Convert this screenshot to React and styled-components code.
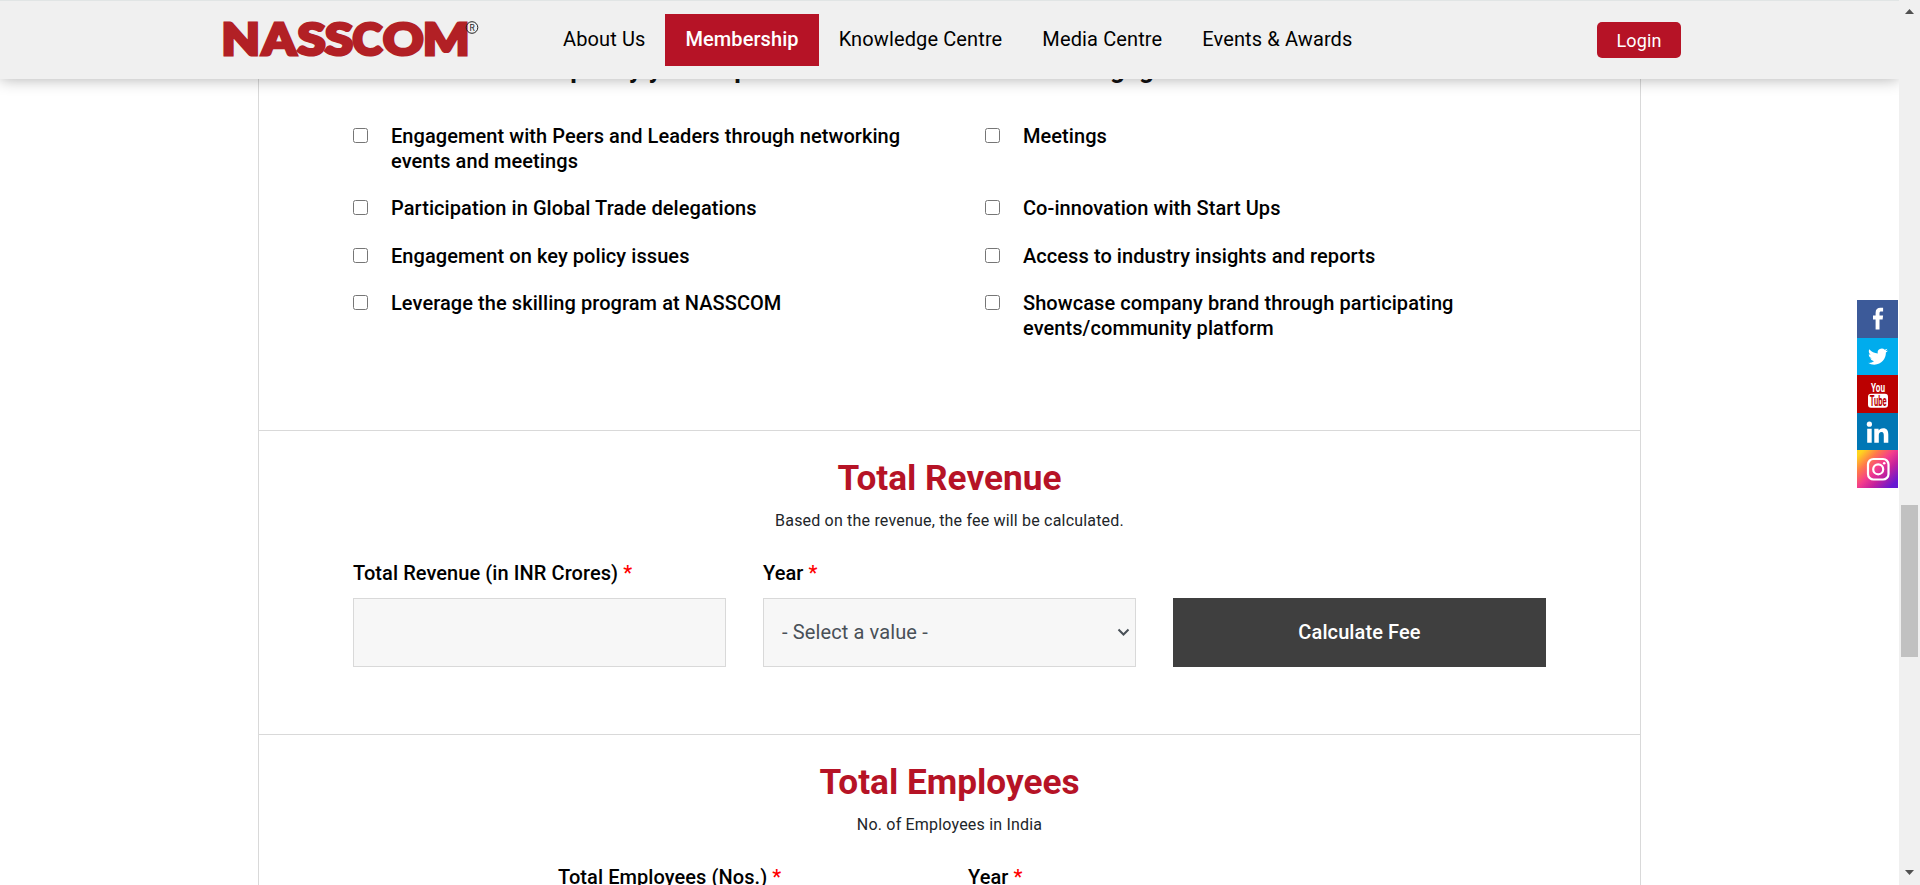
import React from "react";
import styled, { createGlobalStyle } from "styled-components";

const RED = "#b61326";
const LINE = "#d9d9d9";

const GlobalStyle = createGlobalStyle`
  * { box-sizing: border-box; }
  html, body { margin: 0; padding: 0; background: #fff; overflow: hidden; }
  body, button, input, select { font-family: Roboto, "Liberation Sans", sans-serif; }
`;

const Shell = styled.div`
  position: relative;
  display: flex;
  width: 1920px;
  height: 885px;
  overflow: hidden;
  background: #fff;
`;

const Page = styled.div`
  width: 1899px;
  height: 885px;
  overflow: hidden;
`;

const Header = styled.header`
  position: relative;
  z-index: 2;
  display: flex;
  align-items: flex-start;
  height: 79px;
  padding: 0 218px 0 222px;
  border-top: 1px solid #e1e5e5;
  background: #f0f0f0;
  box-shadow: 0 0 15px rgba(0, 0, 0, 0.32);
`;

const Logo = styled.svg`
  width: 260px;
  height: 60px;
  margin-top: 9px;
  overflow: visible;
`;

const Nav = styled.nav`
  display: flex;
  margin: 13px auto 0 61px;
`;

const NavLink = styled.a`
  height: 52px;
  padding: 0 20px;
  font-size: 20px;
  line-height: 50px;
  white-space: nowrap;
  letter-spacing: ${(p) => (p.$active ? 0.08 : 0.12)}px;
  font-weight: ${(p) => (p.$active ? 500 : 400)};
  color: ${(p) => (p.$active ? "#fff" : "#000")};
  background: ${(p) => (p.$active ? RED : "transparent")};
`;

const Login = styled.button`
  width: 84px;
  height: 36px;
  margin-top: 21px;
  padding: 1px 0 0;
  border: 0;
  border-radius: 5px;
  background: ${RED};
  color: #fff;
  font-size: 18px;
  line-height: 36px;
  letter-spacing: 0.1px;
`;

const Panel = styled.main`
  width: 1383px;
  margin: 0 auto;
  border: solid ${LINE};
  border-width: 0 1px;
`;

const Section = styled.section`
  display: flow-root;
  height: ${(p) => p.$height}px;
  padding: 0 94px;
  border-bottom: 1px solid ${LINE};
`;

const Question = styled.h3`
  margin: -26px 0 39px 118px;
  font-size: 26px;
  line-height: 32px;
  font-weight: 700;
  letter-spacing: 0.05px;
  white-space: nowrap;
  color: #111;
`;

const Options = styled.div`
  display: grid;
  grid-template-columns: 632px 1fr;
  row-gap: 22.3px;
`;

const Option = styled.label`
  display: flex;
  align-items: flex-start;
  padding-right: 60px;
  font-size: 20px;
  line-height: 25px;
  font-weight: 500;
  letter-spacing: 0.07px;
  color: #000;
`;

const Checkbox = styled.input`
  flex: none;
  width: 15px;
  height: 15px;
  margin: 4px 22.6px 0 0.4px;
`;

const Title = styled.h2`
  margin: 0;
  padding-top: 26px;
  font-size: 35.2px;
  line-height: 42px;
  font-weight: 700;
  text-align: center;
  color: ${RED};
`;

const Subtitle = styled.p`
  margin: 10px 0 0;
  font-size: 16px;
  line-height: 24px;
  letter-spacing: 0.19px;
  text-align: center;
  color: #212529;
`;

const Fields = styled.div`
  display: flex;
  justify-content: center;
  align-items: flex-end;
  gap: 37px;
  margin-top: 26px;
`;

const Field = styled.div`
  width: 373px;
`;

const FieldLabel = styled.label`
  display: block;
  margin-bottom: 11px;
  font-size: 20px;
  line-height: 28px;
  font-weight: 500;
  letter-spacing: 0.075px;
  color: #000;
`;

const Required = styled.span`
  color: #f00;
`;

const TextInput = styled.input`
  display: block;
  width: 100%;
  height: 69px;
  border: 1px solid ${LINE};
  border-radius: 0;
  background: #f7f7f7;
`;

const SelectBox = styled.div`
  display: flex;
  align-items: center;
  justify-content: space-between;
  height: 69px;
  padding: 0 5px 1px 18px;
  border: 1px solid ${LINE};
  background: #f7f7f7;
  font-size: 20px;
  letter-spacing: 0.12px;
  color: #495057;
`;

const CalcButton = styled.button`
  width: 373px;
  height: 69px;
  padding: 0 0 2px;
  border: 0;
  background: #3f3f3f;
  color: #fff;
  font-size: 20px;
  font-weight: 500;
  letter-spacing: 0.1px;
`;

const SocialBar = styled.aside`
  position: absolute;
  z-index: 1;
  top: 300px;
  right: 22px;
  width: 41px;
  display: grid;
  grid-template-rows: 38px 37px 38px 37px 38px;
`;

const Tile = styled.svg`
  display: block;
  width: 41px;
  height: 100%;
  background: ${(p) => p.$fill};
`;

const Scrollbar = styled.div`
  position: relative;
  z-index: 3;
  display: flex;
  flex-direction: column;
  align-items: center;
  width: 21px;
  height: 885px;
  padding: 9px 0 10px;
  background: #f0f0f0;
`;

const Arrow = styled.svg`
  width: 9px;
  height: 5px;
  margin-bottom: ${(p) => (p.$up ? 491 : 0)}px;
`;

const Thumb = styled.div`
  width: 17px;
  height: 152px;
  margin-bottom: auto;
  background: #c1c1c1;
`;

const options = [
  "Engagement with Peers and Leaders through networking events and meetings",
  "Meetings",
  "Participation in Global Trade delegations",
  "Co-innovation with Start Ups",
  "Engagement on key policy issues",
  "Access to industry insights and reports",
  "Leverage the skilling program at NASSCOM",
  "Showcase company brand through participating events/community platform",
];

const YearField = () => (
  <Field>
    <FieldLabel>Year <Required>*</Required></FieldLabel>
    <SelectBox>
      <span>- Select a value -</span>
      <svg width="13" height="9" viewBox="0 0 13 9">
        <path d="M1.5 1.5 6.5 6.5 11.5 1.5" fill="none" stroke="#495057" strokeWidth="2" />
      </svg>
    </SelectBox>
  </Field>
);

// Start and advance of each letter of the wordmark
const wordmark = [
  ["N", 221.5, 38.5],
  ["A", 262, 34],
  ["S", 297.5, 28],
  ["S", 325, 28],
  ["C", 352.5, 29.5],
  ["O", 383, 40.5],
  ["M", 423, 46.5],
];

export default function App() {
  return (
    <Shell>
      <GlobalStyle />
      <Page>
        <Header>
          <Logo viewBox="222 10 260 60">
            <g fontFamily="Lato" fontWeight="900" fontSize="44.5" fill="#b22025" stroke="#b22025" strokeWidth="3.2">
              {wordmark.map(([letter, x, advance]) => (
                <text key={x} x={x} y="55.4" textLength={advance} lengthAdjust="spacingAndGlyphs">{letter}</text>
              ))}
            </g>
            <circle cx="472" cy="27.5" r="5.8" fill="none" stroke="#222" strokeWidth="1" />
            <text x="469.4" y="30.7" fontFamily="Roboto" fontSize="8.5" fill="#222">R</text>
          </Logo>
          <Nav>
            <NavLink>About Us</NavLink>
            <NavLink $active>Membership</NavLink>
            <NavLink>Knowledge Centre</NavLink>
            <NavLink>Media Centre</NavLink>
            <NavLink>Events &amp; Awards</NavLink>
          </Nav>
          <Login>Login</Login>
        </Header>
        <Panel>
          <Section $height={352}>
            <Question>Please specify your expectations for the NASSCOM engagement</Question>
            <Options>
              {options.map((text) => (
                <Option key={text}>
                  <Checkbox type="checkbox" />
                  <span>{text}</span>
                </Option>
              ))}
            </Options>
          </Section>
          <Section $height={304}>
            <Title>Total Revenue</Title>
            <Subtitle>Based on the revenue, the fee will be calculated.</Subtitle>
            <Fields>
              <Field>
                <FieldLabel>Total Revenue (in INR Crores) <Required>*</Required></FieldLabel>
                <TextInput />
              </Field>
              <YearField />
              <CalcButton>Calculate Fee</CalcButton>
            </Fields>
          </Section>
          <Section $height={304}>
            <Title>Total Employees</Title>
            <Subtitle>No. of Employees in India</Subtitle>
            <Fields>
              <Field>
                <FieldLabel>Total Employees (Nos.) <Required>*</Required></FieldLabel>
                <TextInput />
              </Field>
              <YearField />
            </Fields>
          </Section>
        </Panel>
      </Page>
      <SocialBar>
        <Tile $fill="#3c5a99" viewBox="0 0 41 38">
          <path d="M18.6 29.5V19.5H16v-4h2.6v-2.6c0-3.5 1.8-5.1 4.9-5.1h2.6v3.7h-1.8c-1.4 0-1.8.6-1.8 1.8v2.2h3.6l-.5 4h-3.1v10z" fill="#fff" />
        </Tile>
        <Tile $fill="#00aced" viewBox="0 0 41 37">
          <g transform="translate(11 8.6) scale(.83)">
            <path d="M23.95 4.57a10 10 0 0 1-2.82.78 4.96 4.96 0 0 0 2.16-2.73c-.95.56-2 .96-3.13 1.19a4.92 4.92 0 0 0-8.38 4.48C7.69 8.1 4.07 6.13 1.64 3.16a4.82 4.82 0 0 0-.67 2.48c0 1.71.87 3.21 2.19 4.1a4.9 4.9 0 0 1-2.23-.62v.06a4.92 4.92 0 0 0 3.95 4.83 5 5 0 0 1-2.21.08 4.94 4.94 0 0 0 4.6 3.42A9.87 9.87 0 0 1 0 19.54a14 14 0 0 0 7.55 2.21c9.05 0 14-7.5 14-13.99 0-.21 0-.42-.02-.63a9.94 9.94 0 0 0 2.46-2.55z" fill="#fff" />
          </g>
        </Tile>
        <Tile $fill="#bb0000" viewBox="0 0 41 38">
          <text x="14" y="17" textLength="14" lengthAdjust="spacingAndGlyphs" fontFamily="Roboto" fontWeight="700" fontSize="13" fill="#fff">You</text>
          <rect x="11" y="18.8" width="20" height="14" rx="3" fill="#fff" />
          <text x="12.7" y="31" textLength="17" lengthAdjust="spacingAndGlyphs" fontFamily="Roboto" fontWeight="700" fontSize="14" fill="#bb0000">Tube</text>
        </Tile>
        <Tile $fill="#0077b5" viewBox="0 0 41 37">
          <circle cx="12.4" cy="11.2" r="2.6" fill="#fff" />
          <path d="M10.2 15.7h4.5v14h-4.5zM17.3 15.7h4.3v1.9c.7-1.2 2.2-2.3 4.5-2.3 4 0 5.2 2.5 5.2 6.3v8.1h-4.5v-7.2c0-1.9-.3-3.5-2.3-3.5s-2.7 1.4-2.7 3.4v7.3h-4.5z" fill="#fff" />
        </Tile>
        <Tile $fill="linear-gradient(135deg,#ffd41f 8%,#ff7a49 28%,#f43c8d 48%,#c5219c 65%,#6618d2 90%)" viewBox="0 0 41 38">
          <rect x="11" y="9" width="20.5" height="20.5" rx="5.5" fill="none" stroke="#fff" strokeWidth="2.2" />
          <circle cx="21.2" cy="19.3" r="5" fill="none" stroke="#fff" strokeWidth="2.2" />
          <circle cx="27.2" cy="13.3" r="1.3" fill="#fff" />
        </Tile>
      </SocialBar>
      <Scrollbar>
        <Arrow $up viewBox="0 0 9 5"><path d="M0 5 4.5 0 9 5z" fill="#505050" /></Arrow>
        <Thumb />
        <Arrow viewBox="0 0 9 5"><path d="M0 0h9L4.5 5z" fill="#505050" /></Arrow>
      </Scrollbar>
    </Shell>
  );
}
